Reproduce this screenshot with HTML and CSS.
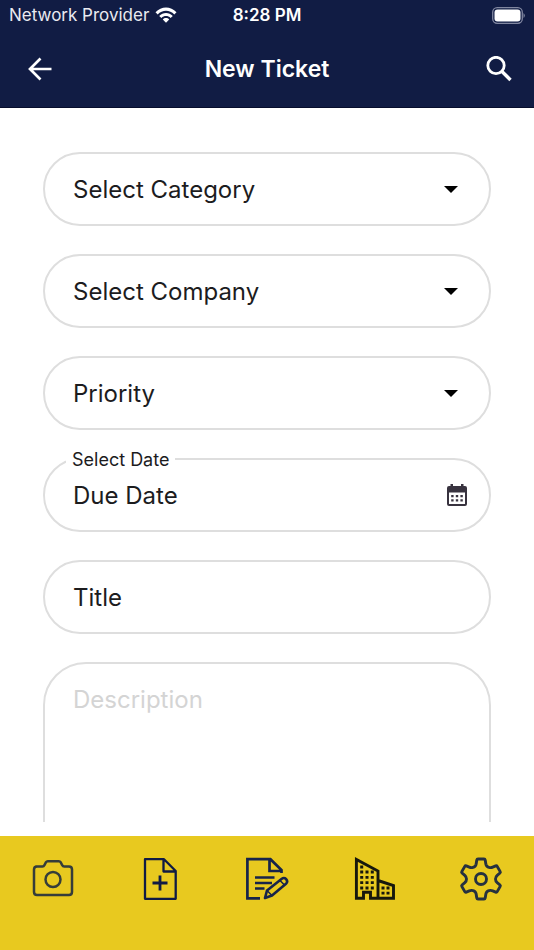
FILE: index.html
```html
<!DOCTYPE html>
<html lang="en">
<head>
<meta charset="utf-8">
<meta name="viewport" content="width=device-width, initial-scale=1">
<title>New Ticket</title>
<link rel="stylesheet" href="styles.css">
</head>
<body>
<header class="top">
  <div class="status">
    <div class="carrier">
      <span>Network Provider</span>
      <svg width="22" height="16" viewBox="0 0 22 16" fill="#fff" aria-hidden="true">
        <path d="M0.5 5.2C6.3-1.2 15.700-1.2 21.500 5.200L19.300 7.400C14.700 2.600 7.300 2.600 2.700 7.400Z"/>
        <path d="M4.200 8.900C8 5 14 5 17.800 8.900L15.600 11C13 8.400 9 8.400 6.400 11Z"/>
        <path d="M7.800 12.400C9.500 10.600 12.500 10.600 14.200 12.400L11 15.800Z"/>
      </svg>
    </div>
    <time class="clock">8:28 PM</time>
    <svg class="battery" width="33" height="17" viewBox="0 0 33 17" aria-hidden="true">
      <rect x="0.700" y="0.700" width="29.600" height="15.600" rx="4.500" fill="none" stroke="#8086a0" stroke-width="1.300"/>
      <rect x="2.500" y="2.500" width="26" height="12" rx="3" fill="#fff"/>
      <path d="M31.500 6v5q1.300-1 1.300-2.500T31.500 6Z" fill="#8086a0"/>
    </svg>
  </div>
  <div class="bar">
    <button class="icon-button" type="button" aria-label="Back">
      <svg width="24" height="24" viewBox="0 0 24 24" fill="none" stroke="#fff" stroke-width="2.700" aria-hidden="true"><path d="M12.500 1.500 2 12 12.500 22.500M2.500 12H23.500"/></svg>
    </button>
    <h1 class="title">New Ticket</h1>
    <button class="icon-button search" type="button" aria-label="Search">
      <svg width="26" height="26" viewBox="0 0 26 26" fill="none" stroke="#fff" stroke-width="2.800" aria-hidden="true"><circle cx="10" cy="9.500" r="8.200"/><path d="m16 15.500 8.500 8.500" stroke-width="3.400"/></svg>
    </button>
  </div>
</header>

<main class="content">
  <form class="form">
    <div class="field">
      <select class="control" aria-label="Category"><option>Select Category</option></select>
      <svg class="caret" width="14" height="7" viewBox="0 0 14 7" aria-hidden="true"><path d="M0 0h14L7 7Z"/></svg>
    </div>
    <div class="field">
      <select class="control" aria-label="Company"><option>Select Company</option></select>
      <svg class="caret" width="14" height="7" viewBox="0 0 14 7" aria-hidden="true"><path d="M0 0h14L7 7Z"/></svg>
    </div>
    <div class="field">
      <select class="control" aria-label="Priority"><option>Priority</option></select>
      <svg class="caret" width="14" height="7" viewBox="0 0 14 7" aria-hidden="true"><path d="M0 0h14L7 7Z"/></svg>
    </div>
    <div class="field">
      <label class="float-label" for="due">Select Date</label>
      <input class="control" id="due" type="text" placeholder="Due Date">
      <button class="calendar" type="button" aria-label="Open calendar">
        <svg width="20" height="22" viewBox="0 0 20 22" aria-hidden="true">
          <path fill="#38333f" fill-rule="evenodd" d="M3.500 0h2.500v2h8V0h2.500v2H18q2 0 2 2v16q0 2-2 2H2q-2 0-2-2V4q0-2 2-2h1.500ZM2 8.500V20h16V8.500Z"/>
          <path fill="#38333f" d="M4.200 11h2.400v2.200H4.200ZM8.800 11h2.400v2.200H8.800ZM13.400 11h2.400v2.200h-2.400ZM4.200 15.300h2.400v2.200H4.200ZM8.800 15.300h2.400v2.200H8.800ZM13.400 15.300h2.400v2.200h-2.400Z"/>
        </svg>
      </button>
    </div>
    <div class="field">
      <input class="control" type="text" placeholder="Title" aria-label="Title">
    </div>
    <textarea class="description" placeholder="Description" aria-label="Description"></textarea>
  </form>
</main>

<nav class="tabs" aria-label="Main">
  <a class="tab" href="#camera" aria-label="Camera">
    <svg width="44" height="44" viewBox="0 0 44 44" fill="none" stroke="#353d3a" stroke-width="2.500" stroke-linejoin="round" aria-hidden="true">
      <path d="M5 9.500h6.500q1.300 0 1.800-1.200L15 5.200q.6-1 1.800-1h11q1.200 0 1.800 1l1.700 3.100q.5 1.200 1.800 1.200H38q3 0 3 3V35q0 3-3 3H6q-3 0-3-3V12.500q0-3 3-3Z"/>
      <circle cx="22" cy="22.500" r="7.500"/>
    </svg>
  </a>
  <a class="tab" href="#new" aria-label="New ticket">
    <svg width="44" height="44" viewBox="0 0 44 44" fill="none" stroke="#101b44" stroke-width="2.300" stroke-linejoin="round" aria-hidden="true">
      <path d="M7 2.200h19L37.700 14v27.800H7ZM25.500 2.200V14.500h12"/>
      <path d="M22 18.500v15M14.500 26h15" stroke-width="2.800"/>
    </svg>
  </a>
  <a class="tab" href="#edit" aria-label="Edit ticket">
    <svg width="44" height="44" viewBox="0 0 44 44" fill="none" stroke="#17244a" stroke-width="2.700" aria-hidden="true">
      <path d="M15 41.300H2.400V2.200h23L36.500 13v3M24.500 2.200V14h12"/>
      <path d="M10 20.500h19.500M10 26h17M10 31.500h9.500" stroke-width="2.400"/>
      <path d="m20 41 2-7.500L36.500 22q2.500-2 4.500 0 2.300 2.500 0 4.700L27 38.500Z" stroke-width="2.600" stroke-linejoin="round"/>
      <path d="m22 33.500 5 5m8-15 4.500 4.500" stroke-width="1.500"/>
    </svg>
  </a>
  <a class="tab" href="#company" aria-label="Companies">
    <svg width="44" height="44" viewBox="0 0 44 44" fill="none" stroke="#17180d" stroke-width="2.900" aria-hidden="true">
      <path d="M11.500 41.300H4.400V2.500L26 14v27.300h-7.500v-6h-7v6ZM26 23.500l15.500 5v12.800H26"/>
      <path d="M8.200 10h3M8.200 15h3M8.200 20.300h3M8.200 25.600h3M8.200 31h3M13.500 15h3M13.500 20.300h3M13.500 25.600h3M13.500 31h3M18.800 15h3M18.800 20.300h3M18.800 25.600h3M18.800 31h3M29.500 31h3M34.500 31h3M29.500 36.200h3M34.500 36.200h3" stroke-width="2.800"/>
    </svg>
  </a>
  <a class="tab" href="#settings" aria-label="Settings">
    <svg width="44" height="44" viewBox="0 0 44 44" fill="none" stroke="#26313f" stroke-width="2.900" stroke-linejoin="round" aria-hidden="true">
      <path d="M19 2h6q1 0 1.200 1l.7 4.200q.5 2.600 3.100 3.200 2 .5 3.700-.2l3-1.300q1-.4 1.500.5l3 5.200q.5.900-.4 1.600l-2.600 2.100q-1.700 1.500-1.700 3.700t1.700 3.700l2.600 2.100q.9.700.4 1.600l-3 5.200q-.5.900-1.500.5l-3-1.300q-1.700-.7-3.700-.2-2.600.6-3.100 3.200L26.200 41q-.2 1-1.200 1h-6q-1 0-1.200-1l-.7-4.200q-.5-2.600-3.100-3.200-2-.5-3.700.2l-3 1.300q-1 .4-1.500-.5l-3-5.200q-.5-.9.400-1.600l2.600-2.100Q7.500 24.200 7.500 22t-1.700-3.700l-2.600-2.100q-.9-.7-.4-1.600l3-5.200q.5-.9 1.500-.5l3 1.300q1.700.7 3.700.2 2.600-.6 3.100-3.200L17.800 3q.2-1 1.200-1Z"/>
      <circle cx="22" cy="22" r="5.500"/>
    </svg>
  </a>
</nav>
</body>
</html>
```
FILE: styles.css
```css
* {
  box-sizing: border-box;
}

body {
  margin: 0;
  height: 100vh;
  display: flex;
  flex-direction: column;
  background: #fff;
  color: #1c1c1e;
  font-family: Inter, "Liberation Sans", sans-serif;
}

button {
  margin: 0;
  padding: 0;
  border: 0;
  background: none;
}

svg {
  display: block;
}

.top {
  background: #111c44;
  border-bottom: 1px solid #070d2c;
  color: #fff;
}

.status {
  display: grid;
  grid-template-columns: 1fr auto 1fr;
  align-items: center;
  height: 30px;
  padding: 0 9px;
  font-size: 17px;
}

.carrier {
  display: flex;
  align-items: center;
  gap: 6px;
  color: #e9eaf0;
}

.clock {
  font-weight: 600;
}

.battery {
  justify-self: end;
}

.bar {
  display: grid;
  grid-template-columns: 1fr auto 1fr;
  align-items: center;
  height: 77px;
  padding: 0 22px;
}

.icon-button {
  display: flex;
  padding-left: 6px;
}

.search {
  justify-self: end;
}

.title {
  margin: 0;
  font-size: 23px;
  font-weight: 600;
  text-align: center;
}

.content {
  flex: 1;
  min-height: 0;
  margin-bottom: 14px;
  padding: 44px 43px 0;
  overflow: hidden;
}

.form {
  display: flex;
  flex-direction: column;
  gap: 28px;
}

.field {
  position: relative;
  display: flex;
  align-items: center;
  height: 74px;
  border: 2px solid #dedede;
  border-radius: 37px;
}

.control {
  flex: 1;
  min-width: 0;
  height: 100%;
  padding: 0 28px;
  border: 0;
  border-radius: 37px;
  outline: 0;
  appearance: none;
  background: none;
  color: #1c1c1e;
  font: 400 24px Inter, "Liberation Sans", sans-serif;
}

.control::placeholder {
  color: #1c1c1e;
  opacity: 1;
}

.caret {
  position: absolute;
  right: 31px;
  pointer-events: none;
}

.float-label {
  position: absolute;
  top: -12px;
  left: 21px;
  padding: 0 6px;
  background: #fff;
  font-size: 18px;
  line-height: 24px;
}

.calendar {
  margin-right: 22px;
}

.description {
  height: 220px;
  padding: 20px 28px;
  border: 2px solid #dedede;
  border-radius: 43px;
  outline: 0;
  resize: none;
  font: 400 24px/32px Inter, "Liberation Sans", sans-serif;
}

.description::placeholder {
  color: #d4d4d4;
  opacity: 1;
}

.tabs {
  display: grid;
  grid-template-columns: repeat(5, 1fr);
  justify-items: center;
  align-items: start;
  height: 114px;
  padding-top: 21px;
  background: #e8c91f;
}

.tab {
  display: flex;
}
```
